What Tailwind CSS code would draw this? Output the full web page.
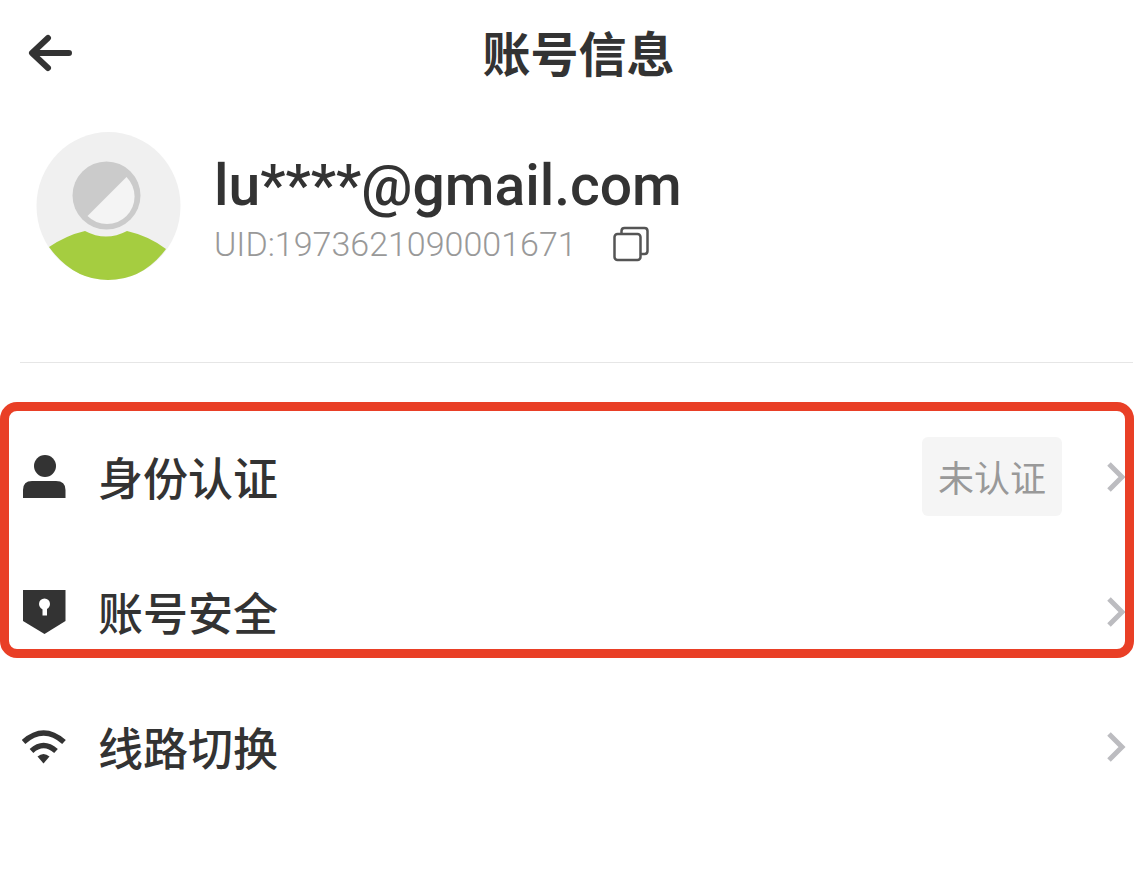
<!DOCTYPE html>
<html lang="zh-CN">

<head>
    <meta charset="UTF-8">
    <meta name="viewport" content="width=device-width, initial-scale=1.0">
    <title>账号信息</title>
    <script src="https://cdn.jsdelivr.net/npm/@tailwindcss/browser@4"></script>
</head>

<body class="bg-white text-[#333333] font-['Noto_Sans_CJK_SC',sans-serif]">

    <header class="grid grid-cols-[1fr_auto_1fr] items-center h-[108px] pl-7 pr-2">
        <button type="button" aria-label="返回" class="justify-self-start">
            <svg class="block w-11 h-10" viewBox="0 0 44 40" fill="none" stroke="currentColor" stroke-width="6" stroke-linecap="round" stroke-linejoin="round">
                <path d="M20 4 L4 19 L20 34 M5 19 H41" />
            </svg>
        </button>
        <h1 class="pb-1.5 text-[48px] leading-[72px] font-bold">账号信息</h1>
    </header>

    <section class="flex items-start gap-8 h-[254px] pl-9 pt-6 font-['Roboto',sans-serif]">
        <svg class="w-[146px] h-[148px] shrink-0" viewBox="0 0 146 148">
            <ellipse cx="72.500" cy="74" rx="72" ry="74" fill="#f0f0f0" />
            <circle cx="70.500" cy="63.500" r="34" fill="#cbcbcb" />
            <path d="M90.500 45 A27.500 27.500 0 0 1 51.500 84 Z" fill="#f4f4f4" />
            <path d="M13 115 Q31 103 49 99 Q70 110 91 99 Q113 104 130 117 Q107 148 72 148 Q37 148 13 115 Z" fill="#a5cd40" />
        </svg>
        <div class="pt-6">
            <p class="text-[57px] leading-[60px] font-medium">lu****@gmail.com</p>
            <div class="flex items-center gap-9">
                <p class="text-[34px] leading-[56px] font-light text-[#999999]">UID:1973621090001671</p>
                <button type="button" aria-label="复制">
                    <svg class="block w-9 h-9" viewBox="0 0 36 36" fill="none" stroke="#555555" stroke-width="2.500">
                        <rect x="1.500" y="8" width="26" height="26" rx="3" />
                        <path d="M8.500 8 V5 Q8.500 2 11.500 2 H31.500 Q34.500 2 34.500 5 V25 Q34.500 28 31.500 28 H28" />
                    </svg>
                </button>
            </div>
        </div>
    </section>

    <hr class="ml-5 mr-1 border-[#e6e6e6]">

    <main class="pt-[46px] text-[45px] leading-[66px] font-medium">
        <div class="relative">
            <button type="button" class="flex items-center w-full h-[135px] pl-[22px] pr-[11px] text-left">
                <svg class="w-11 h-11 shrink-0" viewBox="0 0 44 44" fill="currentColor">
                    <circle cx="23" cy="11" r="11" />
                    <path d="M1 43 V35 Q1 26 10 26 H34 Q43.500 26 43.500 35 V43 Z" />
                </svg>
                <span class="ml-8">身份认证</span>
                <span class="ml-auto px-4 rounded-md bg-[#f5f5f5] text-[36px] leading-[79px] font-normal text-[#999999]">未认证</span>
                <svg class="w-5 h-[30px] shrink-0 ml-11" viewBox="0 0 20 30" fill="none" stroke="#bcbcc0" stroke-width="5">
                    <path d="M3 2 L16 15 L3 28" />
                </svg>
            </button>
            <button type="button" class="flex items-center w-full h-[135px] pl-[22px] pr-[11px] text-left">
                <svg class="w-11 h-11 shrink-0" viewBox="0 0 44 44">
                    <path d="M1 0 H43.500 V31 L22.500 44 L1 31 Z" fill="#333333" />
                    <circle cx="22.500" cy="14" r="5.500" fill="#fff" />
                    <path d="M20.500 15 H25 V25.500 H20.500 Z" fill="#fff" />
                </svg>
                <span class="ml-8">账号安全</span>
                <svg class="w-5 h-[30px] shrink-0 ml-auto" viewBox="0 0 20 30" fill="none" stroke="#bcbcc0" stroke-width="5">
                    <path d="M3 2 L16 15 L3 28" />
                </svg>
            </button>
            <!-- highlight frame -->
            <div class="absolute -top-[7px] bottom-[21px] left-0 right-[3px] border-[9px] border-[#e93f26] rounded-[17px] pointer-events-none"></div>
        </div>
        <button type="button" class="flex items-center w-full h-[135px] pl-[22px] pr-[11px] text-left">
            <svg class="w-11 h-11 shrink-0" viewBox="0 0 44 44">
                <g fill="none" stroke="#333333" stroke-width="5.500">
                    <path d="M1.500 17 Q21.500 -1 42 17" />
                    <path d="M9.500 26 Q21.500 15 34 26" />
                </g>
                <path d="M15.500 31.500 Q21.500 26.500 27.500 31.500 L21.500 38.500 Z" fill="#333333" />
            </svg>
            <span class="ml-8">线路切换</span>
            <svg class="w-5 h-[30px] shrink-0 ml-auto" viewBox="0 0 20 30" fill="none" stroke="#bcbcc0" stroke-width="5">
                <path d="M3 2 L16 15 L3 28" />
            </svg>
        </button>
    </main>

</body>

</html>
